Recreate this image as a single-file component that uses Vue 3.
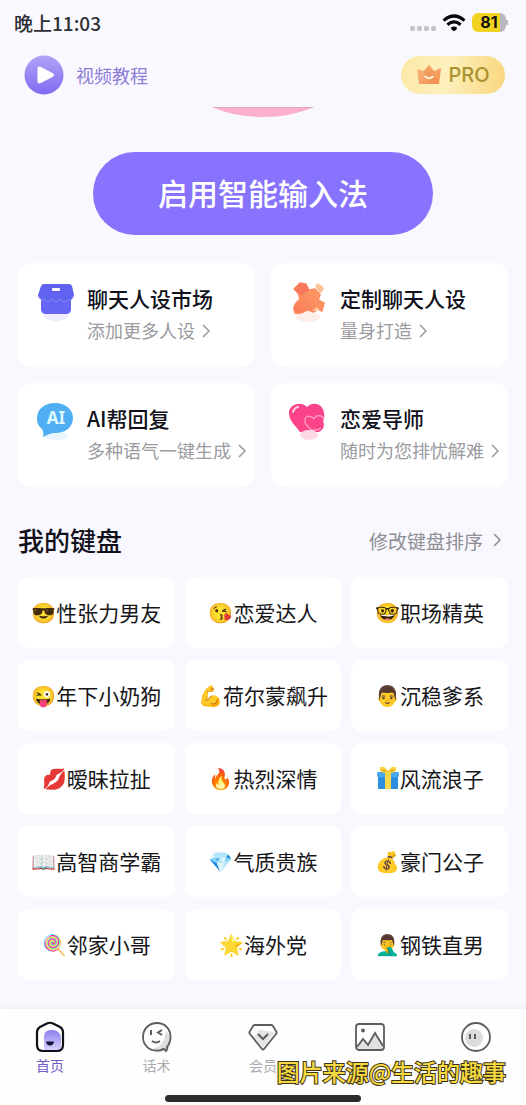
<script setup>
const features = [
  { icon: 'shop', title: '聊天人设市场', note: '添加更多人设' },
  { icon: 'craft', title: '定制聊天人设', note: '量身打造' },
  { icon: 'ai', title: 'AI帮回复', note: '多种语气一键生成' },
  { icon: 'heart', title: '恋爱导师', note: '随时为您排忧解难' }
]

const personas = [
  ['😎', '性张力男友'], ['😘', '恋爱达人'], ['🤓', '职场精英'],
  ['😜', '年下小奶狗'], ['💪', '荷尔蒙飙升'], ['👨', '沉稳爹系'],
  ['💋', '暧昧拉扯'], ['🔥', '热烈深情'], ['gift', '风流浪子'],
  ['📖', '高智商学霸'], ['💎', '气质贵族'], ['💰', '豪门公子'],
  ['🍭', '邻家小哥'], ['🌟', '海外党'], ['🤦‍♂️', '钢铁直男']
]
</script>

<template>
  <div class="app">
    <div class="status">
      <time>晚上11:03</time>
      <div class="status-icons">
        <svg class="dots" viewBox="0 0 26 6" aria-hidden="true"><g fill="#c3c2ca"><rect x="0" y="1" width="5" height="5" rx="2" /><rect x="7" y="1" width="5" height="5" rx="2" /><rect x="14" y="1" width="5" height="5" rx="2" /><rect x="21" y="1" width="5" height="5" rx="2" /></g></svg>
        <svg class="wifi" viewBox="0 0 24 18" aria-hidden="true"><g fill="none" stroke="#08080a" stroke-width="3.2"><path d="M1.6 6.6Q12-2.6 22.4 6.6" /><path d="M5.4 10.8Q12 5 18.6 10.8" /></g><path d="M8.8 13.8Q12 11 15.2 13.8Q15 16 12 17.2Q9 16 8.8 13.8Z" fill="#08080a" /></svg>
        <div class="battery"><span>81</span></div>
      </div>
    </div>

    <header class="header">
      <a class="tutorial" href="#">
        <svg viewBox="0 0 40 40" aria-hidden="true">
          <defs><linearGradient id="play" x1="0" y1="0" x2="0" y2="1"><stop offset="0" stop-color="#b3a3f5" /><stop offset="1" stop-color="#8069f3" /></linearGradient></defs>
          <circle cx="20" cy="20" r="19.5" fill="url(#play)" />
          <path d="M15.5 13.5V26.5L28 20Z" fill="#fff" stroke="#fff" stroke-width="4" stroke-linejoin="round" />
        </svg>
        <span>视频教程</span>
      </a>
      <button class="pro" type="button">
        <svg viewBox="0 0 26 22" aria-hidden="true">
          <defs><linearGradient id="crown" x1="0" y1="0" x2="1" y2="1"><stop offset="0" stop-color="#f9bd83" /><stop offset="1" stop-color="#f28b4c" /></linearGradient></defs>
          <path d="M1 5Q4 6 8 7L13 1L18 7L25 4L23 20H3Z" fill="url(#crown)" />
          <path d="M13 1L18 7L20 15Q14 18 9 14L8 7Z" fill="#f18a4a" opacity=".4" />
          <path d="M9 12.500Q13 16 17 12.500" fill="none" stroke="#fff0d6" stroke-width="1.800" stroke-linecap="round" />
        </svg>
        <span>PRO</span>
      </button>
    </header>

    <main class="content">
      <div class="hero"><svg viewBox="0 0 102 11" aria-hidden="true"><path d="M0 0H102Q80 10 51 10T0 0Z" fill="#fbb0ce" /><path d="M1 .5H101" stroke="#dfa8c0" stroke-width="1" /></svg></div>
      <button class="enable" type="button">启用智能输入法</button>

      <section class="features">
        <a v-for="f in features" :key="f.title" class="feature" href="#">
          <svg v-if="f.icon === 'shop'" class="feature-icon" viewBox="0 0 40 44" aria-hidden="true">
            <ellipse cx="21" cy="35" rx="12" ry="5" fill="#eeebfe" />
            <path d="M6 15H36V28Q36 33 31 33H11Q6 33 6 28Z" fill="#6664f5" />
            <path d="M9 3H34Q36 3 37 5L39 14Q38 20 33 19Q29 23 25 18Q21 23 17 18Q12 23 9 18Q3 19 3 14L6 5Q7 3 9 3Z" fill="#6063f0" />
            <path d="M4 15Q5 20 9 18Q12 23 17 18Q21 23 25 18Q29 23 33 19Q37 20 38 15" fill="none" stroke="#8288fb" stroke-width="1" />
            <rect x="17" y="7" width="8" height="3" rx="1" fill="#fff" />
          </svg>
          <svg v-else-if="f.icon === 'craft'" class="feature-icon" viewBox="0 0 40 44" aria-hidden="true">
            <defs><linearGradient id="craft" x1="0" y1="1" x2="1" y2="0"><stop offset="0" stop-color="#f87958" /><stop offset="1" stop-color="#ffa568" /></linearGradient></defs>
            <ellipse cx="20" cy="36" rx="12" ry="5" fill="#fdeee9" />
            <path d="M27 5L30 2Q34 4 36 8L32 13Z" fill="#ffc39b" />
            <path d="M6 8L12 2L18 3L21 9L27 8L32 14L30 19L36 22L34 30L30 28L26 31L19 29Q14 33 7 32Q4 26 9 21L12 18L10 12Z" fill="url(#craft)" stroke="#ff8b5f" stroke-width="1.500" stroke-linejoin="round" />
            <path d="M6 8L12 2L18 3L21 9L14 14L10 12Z" fill="#f5795a" />
            <path d="M24 30L29 26L31 29Z" fill="#ffd5ae" />
          </svg>
          <svg v-else-if="f.icon === 'ai'" class="feature-icon" viewBox="0 0 40 44" aria-hidden="true">
            <ellipse cx="21" cy="35" rx="12" ry="4" fill="#e9f6fd" />
            <path d="M20 2C31 2 38 9 38 17C38 27 29 33 18 32Q13 33 8 36Q9 31 7 28C3 25 2 21 2 17C2 8 10 2 20 2Z" fill="#50aef3" />
            <text x="21" y="23" text-anchor="middle" class="ai-mark">AI</text>
          </svg>
          <svg v-else class="feature-icon" viewBox="0 0 40 44" aria-hidden="true">
            <path d="M19 6C24 0 35 2 36 12Q37 17 35 20Q38 27 31 31H12C7 24 2 21 1 13C0 4 12-1 19 6Z" fill="#fa4388" />
            <path d="M26 18C28 13 34 14 36 18M26 18C22 13 16 15 17 21Q18 25 24 29Q29 30 33 27" fill="none" stroke="#ff9fc2" stroke-width="1.300" />
            <path d="M5 11Q6 7 10 6" fill="none" stroke="#ffd2e2" stroke-width="2" stroke-linecap="round" />
            <ellipse cx="21" cy="34" rx="9" ry="5" fill="#fdd9e5" />
          </svg>
          <div class="feature-text">
            <h2>{{ f.title }}</h2>
            <p><span>{{ f.note }}</span><svg class="chevron" viewBox="0 0 10 16" aria-hidden="true"><path d="M2 2L8 8L2 14" /></svg></p>
          </div>
        </a>
      </section>

      <div class="section-head">
        <h1>我的键盘</h1>
        <a href="#"><span>修改键盘排序</span><svg class="chevron" viewBox="0 0 10 16" aria-hidden="true"><path d="M2 2L8 8L2 14" /></svg></a>
      </div>

      <section class="personas">
        <button v-for="[emoji, name] in personas" :key="name" type="button">
          <svg v-if="emoji === 'gift'" class="gift" viewBox="0 0 24 24" aria-hidden="true">
            <rect x="2" y="10" width="20" height="13" rx="1" fill="#2e8fe0" />
            <rect x="1" y="6" width="22" height="5" rx="1" fill="#48a8ee" />
            <rect x="9" y="6" width="6" height="17" fill="#f7d84a" />
            <path d="M12 7C7 7 3 6 4 2C6-1 10 2 12 5C14 2 18-1 20 2C21 6 17 7 12 7Z" fill="#f9cf3c" />
            <path d="M10.500 5.500Q8 3 6 3.500Q6 5.500 10.500 5.500ZM13.500 5.500Q16 3 18 3.500Q18 5.500 13.500 5.500Z" fill="#d69e1c" />
          </svg>
          <span v-else class="emoji">{{ emoji }}</span>
          <span>{{ name }}</span>
        </button>
      </section>
    </main>

    <footer class="footer">
      <nav class="tabs">
        <a class="active" href="#">
          <svg viewBox="0 0 32 32" aria-hidden="true">
            <defs><linearGradient id="home" x1="0" y1="0" x2="0" y2="1"><stop offset="0" stop-color="#8c80ed" /><stop offset="1" stop-color="#d8d3ff" /></linearGradient></defs>
            <path d="M10 29V16C10 10 14 9 18 9C23 9 27 12 27 17V29Z" fill="url(#home)" />
            <path d="M13 2.500Q16 1 19 2.500L26 6Q29 8 29 11V24Q29 30 23 30H9Q3 30 3 24V11Q3 8 6 6Z" fill="none" stroke="#111019" stroke-width="2.200" />
            <path d="M12 20.500H20Q19.500 24.500 16 24.500T12 20.500Z" fill="#171239" />
          </svg>
          <span>首页</span>
        </a>
        <a href="#">
          <svg viewBox="0 0 32 32" aria-hidden="true">
            <path d="M10 28Q23 27 25 10L29 15V24L26 30Z" fill="#dededf" />
            <path d="M25 30Q27 28 26 26Q30 21 29.500 15C29 7 23 2 16 2C8 2 2 8 2 16S8 30 16 29.500Q20 30 22 28Q24 28 25 30Z" fill="none" stroke="#5d5d60" stroke-width="1.800" />
            <path d="M10 9V14M21 9L17 11.500L21 14M11 20Q15 23 19 20" fill="none" stroke="#5d5d60" stroke-width="2" />
          </svg>
          <span>话术</span>
        </a>
        <a href="#">
          <svg viewBox="0 0 32 32" aria-hidden="true">
            <path d="M11 9L28 11L16 27L8 17Z" fill="#e5e5e6" />
            <path d="M8 4H24Q25 4 26 5L29.500 11Q30 12 29 13L17 28Q16 29 15 28L3 13Q2 12 2.500 11L6 5Q7 4 8 4Z" fill="none" stroke="#5d5d60" stroke-width="1.800" />
            <path d="M11 13L16 18L21 13" fill="none" stroke="#5d5d60" stroke-width="2" />
          </svg>
          <span>会员</span>
        </a>
        <a href="#" aria-label="图片">
          <svg viewBox="0 0 32 32" aria-hidden="true">
            <path d="M3 24L9 17L14 22L21 11L29 23V28H4Z" fill="#e1e1e2" />
            <rect x="2" y="3" width="28" height="26" rx="3" fill="none" stroke="#5d5d60" stroke-width="1.800" />
            <path d="M3 26L9 18L14 24L21 12L29 25" fill="none" stroke="#5d5d60" stroke-width="1.800" />
            <circle cx="9" cy="9.500" r="2" fill="#5d5d60" />
          </svg>
        </a>
        <a href="#" aria-label="我的">
          <svg viewBox="0 0 32 32" aria-hidden="true">
            <circle cx="14" cy="17" r="9" fill="#dcdcdd" />
            <circle cx="16" cy="16" r="14" fill="none" stroke="#5d5d60" stroke-width="1.800" />
            <path d="M10 13V18M15 13V18" stroke="#5d5d60" stroke-width="2" />
          </svg>
        </a>
      </nav>
      <div class="home-bar"></div>
      <div class="credit">图片来源@生活的趣事</div>
    </footer>
  </div>
</template>

<style>
body {
  background: #f8f8fe;
}
</style>

<style scoped>
.app {
  min-height: 100vh;
  display: flex;
  flex-direction: column;
  background: #f8f8fe;
  color: #11111c;
  font-family: "Noto Sans CJK SC", "Noto Color Emoji", sans-serif;
}
a {
  color: inherit;
  text-decoration: none;
}
button {
  border: 0;
  margin: 0;
  padding: 0;
  font-family: inherit;
  cursor: pointer;
}
h1, h2, p {
  margin: 0;
}
svg {
  display: block;
  flex: none;
}
.status {
  height: 45px;
  padding: 0 20px 0 14px;
  display: flex;
  align-items: center;
  justify-content: space-between;
  font-size: 19px;
  font-weight: 500;
  color: #2f2f36;
}
.status-icons {
  display: flex;
  align-items: center;
  gap: 6px;
}
.dots {
  width: 26px;
  height: 6px;
  margin-top: 10px;
}
.wifi {
  width: 24px;
  height: 18px;
}
.battery {
  position: relative;
  width: 34px;
  height: 19px;
  border-radius: 6px;
  background: linear-gradient(90deg, #f3d321 81%, #b9b8c1 81%);
  color: #111;
  font: bold 16px/19px Inter, sans-serif;
  text-align: center;
}
.battery::after {
  content: "";
  position: absolute;
  left: 100%;
  top: 7px;
  width: 2px;
  height: 5px;
  background: #b9b8c1;
}
.header {
  height: 62px;
  padding: 0 21px 2px 24px;
  box-sizing: border-box;
  display: flex;
  align-items: center;
  justify-content: space-between;
}
.tutorial {
  display: flex;
  align-items: center;
  gap: 12px;
  font-size: 18px;
  color: #8f7dd8;
}
.tutorial svg {
  width: 40px;
  height: 40px;
}
.pro {
  width: 104px;
  height: 38px;
  border-radius: 19px;
  background: linear-gradient(100deg, #fbe9a6, #fdf0bd 45%, #f9d67b);
  display: flex;
  align-items: center;
  justify-content: center;
  gap: 6px;
  color: #ab9130;
  font: 500 20px/24px Inter, sans-serif;
}
.pro svg {
  width: 26px;
  height: 22px;
}
.content {
  padding: 0 18px 29px;
}
.hero {
  height: 45px;
}
.hero svg {
  width: 102px;
  height: 11px;
  margin: 0 auto;
}
.enable {
  display: block;
  width: 340px;
  max-width: 100%;
  height: 83px;
  margin: 0 auto 28px;
  padding-bottom: 3px;
  border-radius: 42px;
  background: #8773fd;
  color: #fff;
  font-size: 30px;
  font-weight: 500;
}
.features {
  display: grid;
  grid-template-columns: 1fr 1fr;
  gap: 16px;
}
.feature {
  height: 104px;
  padding: 18px 0 0 17px;
  box-sizing: border-box;
  border-radius: 14px;
  background: #fff;
  display: flex;
  gap: 12px;
}
.feature-icon {
  width: 40px;
  height: 44px;
}
.ai-mark {
  font: bold 17px "Noto Sans", sans-serif;
  fill: #ddf9ff;
}
.feature-text {
  white-space: nowrap;
}
h2 {
  font-size: 21px;
  line-height: 34px;
  font-weight: 500;
}
p {
  display: flex;
  align-items: center;
  gap: 6px;
  font-size: 18px;
  line-height: 31px;
  color: #9a9a9f;
}
.chevron {
  width: 10px;
  height: 16px;
  fill: none;
  stroke: currentColor;
  stroke-width: 1.5;
}
.section-head {
  height: 90px;
  padding: 16px 6px 0 0;
  display: flex;
  align-items: center;
  justify-content: space-between;
  box-sizing: border-box;
}
h1 {
  font-size: 26px;
  line-height: 38px;
  font-weight: 500;
}
.section-head a {
  display: flex;
  align-items: center;
  gap: 9px;
  font-size: 19px;
  color: #8e8e94;
}
.personas {
  display: grid;
  grid-template-columns: repeat(3, 1fr);
  gap: 12px 10px;
}
.personas button {
  height: 71px;
  padding-bottom: 2px;
  border-radius: 10px;
  background: #fff;
  color: #161618;
  display: flex;
  align-items: center;
  justify-content: center;
  font-size: 21px;
  white-space: nowrap;
}
.personas .emoji {
  font-size: 20px;
}
.gift {
  width: 24px;
  height: 24px;
}
.footer {
  position: relative;
  margin-top: auto;
  padding: 12px 20px 5px;
  background: #fefefe;
  box-shadow: 0 -1px 5px #ededf6;
}
.tabs {
  display: flex;
  justify-content: space-between;
  height: 74px;
}
.tabs a {
  width: 60px;
  display: flex;
  flex-direction: column;
  align-items: center;
  font-size: 14px;
  line-height: 24px;
  color: #ababaf;
}
.tabs svg {
  width: 32px;
  height: 32px;
}
.tabs .active {
  color: #6f5cc9;
}
.home-bar {
  width: 196px;
  height: 7px;
  margin: 0 auto;
  border-radius: 4px;
  background: #2d2d2f;
}
.credit {
  position: absolute;
  right: 20px;
  bottom: 19px;
  font-size: 23px;
  line-height: 34px;
  font-weight: 500;
  color: #f6da3f;
  -webkit-text-stroke: 2px #3a331c;
  paint-order: stroke fill;
  white-space: nowrap;
}
</style>
